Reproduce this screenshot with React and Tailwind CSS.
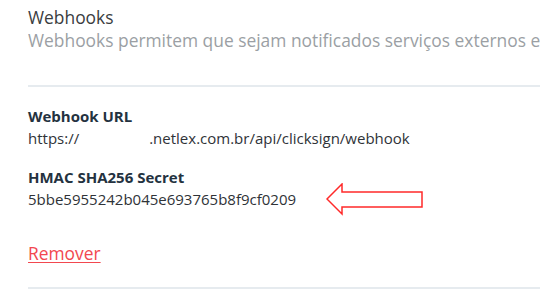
export default function App() {
  return (
    <div className="w-[540px] h-[299px] overflow-hidden bg-white" style={{ fontFamily: '"Open Sans", "Noto Sans", sans-serif' }}>
      <div className="pl-[28px]">
        <div className="pt-[6px] text-[17.4px] leading-[23px] text-[#3a3d40]">Webhooks</div>
        <div className="text-[17.4px] leading-[23px] text-[#9b9fa4] whitespace-nowrap overflow-hidden">
          Webhooks permitem que sejam notificados serviços externos e informados sobre eventos
        </div>
        <div className="mt-[33px] h-[2px] bg-[#e6ebef]" />
        <div className="pt-[18px]">
          <div className="text-[15px] leading-[22px] font-bold text-[#243240]">Webhook URL</div>
          <div className="text-[15px] leading-[22px] text-[#2f3338] whitespace-nowrap">
            https://<span className="inline-block w-[70px]" />.netlex.com.br/api/clicksign/webhook
          </div>
        </div>
        <div className="pt-[17px]">
          <div className="text-[15px] leading-[22px] font-bold text-[#243240]">HMAC SHA256 Secret</div>
          <div className="relative text-[15px] leading-[22px] text-[#2f3338]">
            5bbe5955242b045e693765b8f9cf0209
            <svg className="absolute left-[298px] top-[-5px]" width="98" height="34" viewBox="0 0 98 34">
              <path d="M1 16 L16 1 L16 9 L96 9 L96 24 L16 24 L16 31 Z" fill="none" stroke="#ff2a2a" strokeWidth="1.5" />
            </svg>
          </div>
        </div>
        <div className="pt-[32px]">
          <span className="text-[17.4px] leading-[23px] text-[#f2474f] underline underline-offset-[2px]">Remover</span>
        </div>
        <div className="mt-[21px] h-[2px] bg-[#e6ebef]" />
      </div>
    </div>
  );
}
